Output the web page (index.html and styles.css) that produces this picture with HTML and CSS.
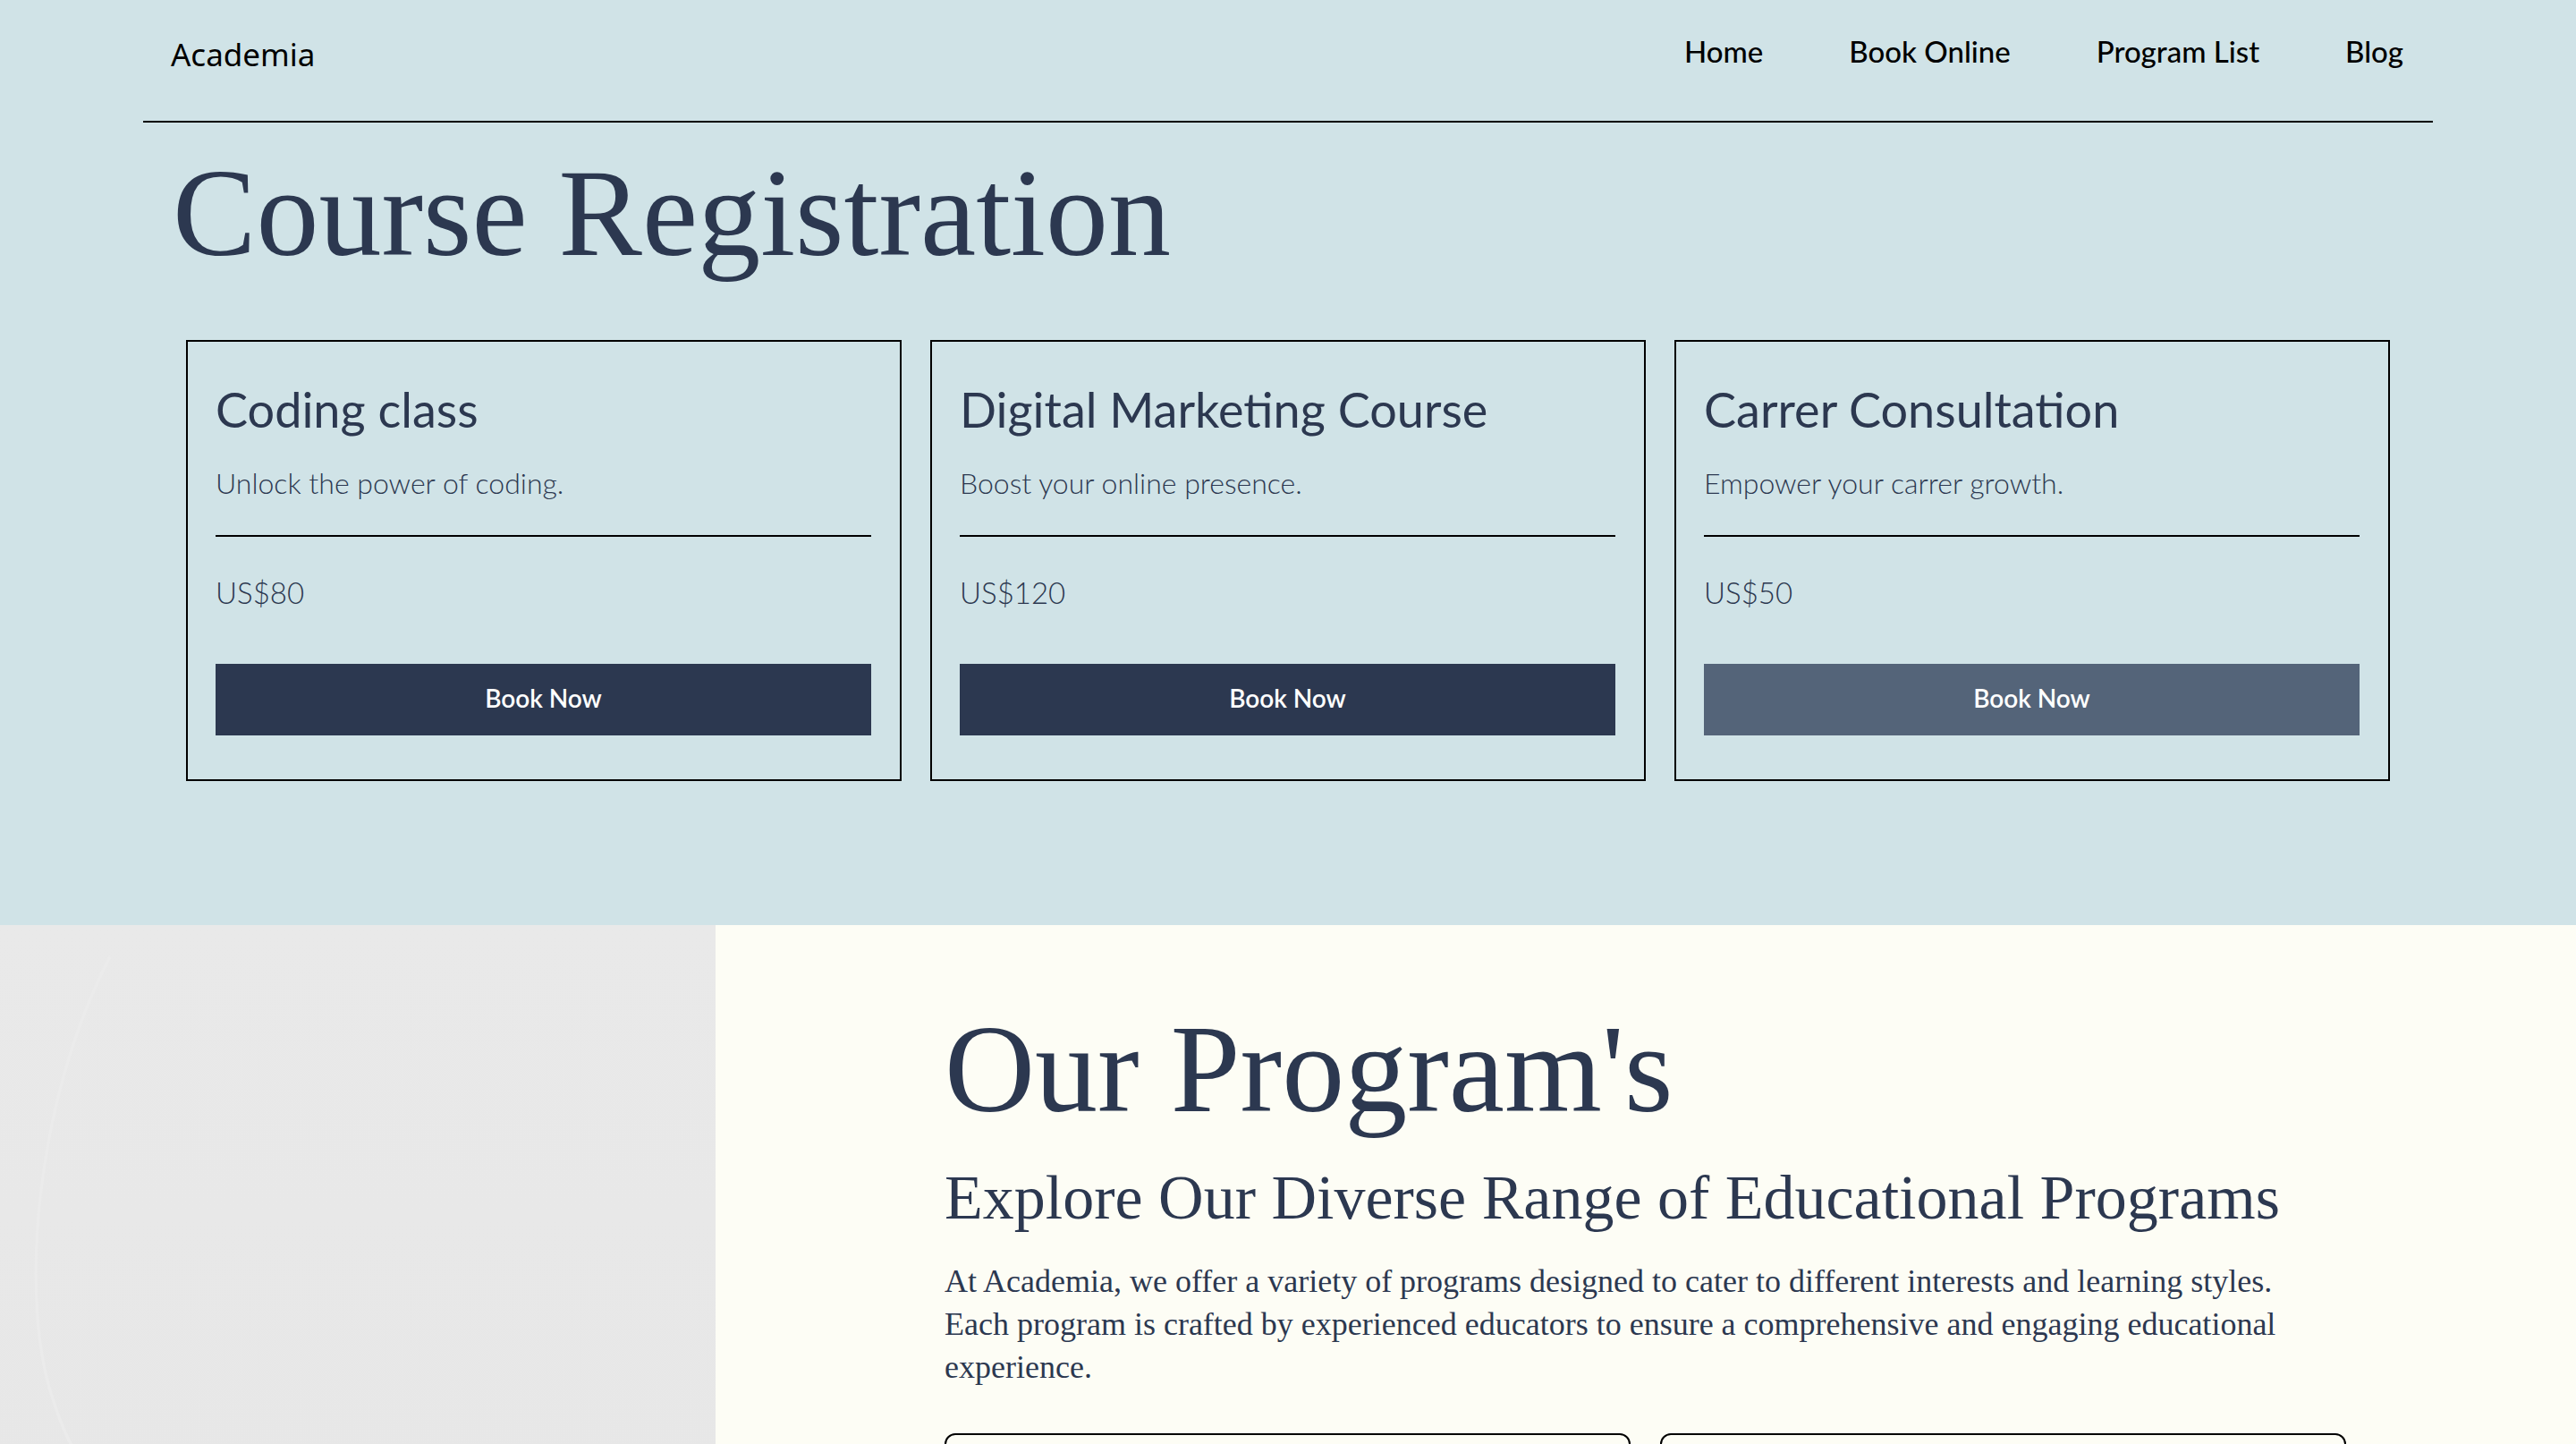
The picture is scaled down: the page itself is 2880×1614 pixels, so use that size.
FILE: index.html
```html
<!DOCTYPE html>
<html lang="en">
<head>
<meta charset="utf-8">
<title>Academia</title>
<link rel="stylesheet" href="styles.css">
</head>
<body>
<section class="top">
  <header class="header">
    <div class="brand">Academia</div>
    <nav class="nav">
      <a href="#">Home</a>
      <a href="#">Book Online</a>
      <a href="#">Program List</a>
      <a href="#">Blog</a>
    </nav>
  </header>
  <h1 class="page-title">Course Registration</h1>
  <div class="cards">
    <div class="card">
      <h2 class="card-title">Coding class</h2>
      <p class="card-desc">Unlock the power of coding.</p>
      <hr class="card-rule">
      <p class="card-price">US$80</p>
      <a class="btn" href="#">Book Now</a>
    </div>
    <div class="card">
      <h2 class="card-title">Digital Marketing Course</h2>
      <p class="card-desc">Boost your online presence.</p>
      <hr class="card-rule">
      <p class="card-price">US$120</p>
      <a class="btn" href="#">Book Now</a>
    </div>
    <div class="card">
      <h2 class="card-title">Carrer Consultation</h2>
      <p class="card-desc">Empower your carrer growth.</p>
      <hr class="card-rule">
      <p class="card-price">US$50</p>
      <a class="btn btn-hover" href="#">Book Now</a>
    </div>
  </div>
</section>
<section class="programs">
  <div class="programs-media">
    <svg class="media-art" viewBox="0 0 800 600" preserveAspectRatio="none">
      <path d="M123 22 C 40 120, 20 260, 60 330 C 100 410, 200 440, 290 438 C 400 430, 520 380, 678 367" fill="none" stroke="#ebebeb" stroke-width="3"/>
      <path d="M678 367 L 632 545" fill="none" stroke="#ebebeb" stroke-width="3"/>
      <path d="M0 520 C 60 590, 180 610, 280 600 C 420 585, 560 560, 752 537" fill="none" stroke="#eaeaea" stroke-width="3"/>
      <path d="M632 545 L 560 600" fill="none" stroke="#eaeaea" stroke-width="3"/>
      <path d="M752 537 L 700 600" fill="none" stroke="#eaeaea" stroke-width="3"/>
    </svg>
  </div>
  <div class="programs-body">
    <h2 class="programs-title">Our Program's</h2>
    <h3 class="programs-sub">Explore Our Diverse Range of Educational Programs</h3>
    <p class="programs-text">At Academia, we offer a variety of programs designed to cater to different interests and learning styles. Each program is crafted by experienced educators to ensure a comprehensive and engaging educational experience.</p>
    <div class="program-cards">
      <div class="program-card"></div>
      <div class="program-card"></div>
    </div>
  </div>
</section>
</body>
</html>
```
FILE: styles.css
```css
* { box-sizing: border-box; }
html, body { margin: 0; padding: 0; }
body {
  background: #fdfdf5;
  color: #2c3850;
  font-family: Lato, "Noto Sans", sans-serif;
  overflow: hidden;
}
.top {
  background: #d0e3e7;
  padding-bottom: 161px;
}
.header {
  width: 2560px;
  margin: 0 auto;
  height: 137px;
  border-bottom: 2px solid #000;
  display: flex;
  align-items: center;
  justify-content: space-between;
  padding: 0 33px 14px 31px;
}
.brand {
  font-family: "Noto Sans", sans-serif;
  font-size: 35px;
  color: #000;
}
.nav {
  display: flex;
  gap: 96px;
  margin-bottom: 8px;
}
.nav a {
  font-family: Lato, sans-serif;
  font-weight: 500;
  font-size: 33px;
  color: #000;
  text-decoration: none;
}
.page-title {
  margin: 31px 0 0 193px;
  font-family: "Liberation Serif", serif;
  font-weight: 400;
  font-size: 140px;
  line-height: 1;
  color: #2c3850;
}
.cards {
  display: flex;
  justify-content: center;
  gap: 32px;
  margin-top: 72px;
}
.card {
  width: 800px;
  border: 2px solid #000;
  padding: 44px 32px 49px 31px;
  display: flex;
  flex-direction: column;
}
.card-title {
  margin: 0;
  font-size: 54px;
  font-weight: 400;
  line-height: 1.2;
  color: #2c3850;
}
.card-desc {
  margin: 30px 0 0;
  font-size: 32px;
  font-weight: 300;
  line-height: 1.2;
  color: #2c3850;
}
.card-rule {
  margin: 39px 0 0;
  border: 0;
  border-top: 2px solid #000;
  height: 0;
}
.card-price {
  margin: 43px 0 0;
  font-size: 33px;
  font-weight: 300;
  line-height: 1.2;
  color: #2c3850;
}
.btn {
  margin-top: 59px;
  height: 80px;
  display: flex;
  align-items: center;
  justify-content: center;
  padding-bottom: 4px;
  background: #2c3850;
  color: #fff;
  font-size: 28px;
  font-weight: 600;
  text-decoration: none;
}
.btn-hover { background: #546479; }
.programs {
  display: grid;
  grid-template-columns: 800px 1fr;
  min-height: 700px;
}
.programs-media {
  background: linear-gradient(180deg, #e9e9e9 0%, #e6e6e6 100%);
  position: relative;
  overflow: hidden;
}
.media-art {
  position: absolute;
  inset: 0;
  width: 100%;
  height: 100%;
}
.programs-body {
  background: #fdfdf5;
  padding: 91px 0 0 256px;
}
.programs-title {
  margin: 0;
  font-family: "Liberation Serif", serif;
  font-weight: 400;
  font-size: 140px;
  line-height: 1;
  color: #2c3850;
}
.programs-sub {
  margin: 32px 0 0;
  font-family: "Liberation Serif", serif;
  font-weight: 400;
  font-size: 70px;
  line-height: 1.2;
  color: #2c3850;
}
.programs-text {
  margin: 27px 0 0;
  width: 1550px;
  font-family: "Liberation Serif", serif;
  font-size: 36px;
  line-height: 48px;
  color: #2c3850;
}
.program-cards {
  display: flex;
  gap: 33px;
  margin-top: 50px;
  width: 1567px;
}
.program-card {
  flex: 1;
  height: 400px;
  border: 2px solid #000;
  border-radius: 12px;
}
```
